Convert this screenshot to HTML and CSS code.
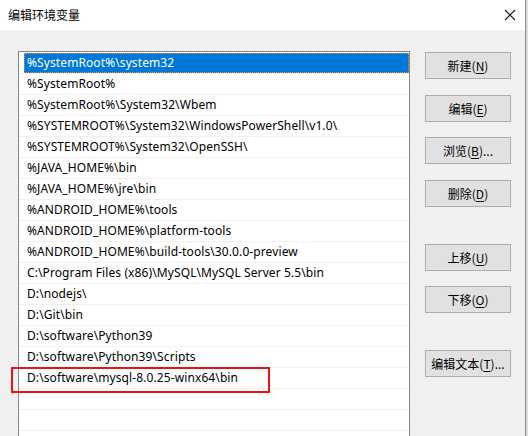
FILE: index.html
```html
<!DOCTYPE html>
<html lang="zh-CN">
<head>
<meta charset="utf-8">
<title>编辑环境变量</title>
<link rel="stylesheet" href="styles.css">
</head>
<body>
<div class="screen">
  <div class="dialog">
    <div class="titlebar">
      <span class="title">编辑环境变量</span>
      <svg class="close" width="12" height="12" viewBox="0 0 12 12"><path d="M1 1 L11 11 M11 1 L1 11" stroke="#111" stroke-width="1.1" fill="none"/></svg>
    </div>
    <div class="content">
      <div class="list">
        <div class="row"><span class="cell selected">%SystemRoot%\system32</span></div>
        <div class="row"><span class="cell">%SystemRoot%</span></div>
        <div class="row"><span class="cell">%SystemRoot%\System32\Wbem</span></div>
        <div class="row"><span class="cell">%SYSTEMROOT%\System32\WindowsPowerShell\v1.0\</span></div>
        <div class="row"><span class="cell">%SYSTEMROOT%\System32\OpenSSH\</span></div>
        <div class="row"><span class="cell">%JAVA_HOME%\bin</span></div>
        <div class="row"><span class="cell">%JAVA_HOME%\jre\bin</span></div>
        <div class="row"><span class="cell">%ANDROID_HOME%\tools</span></div>
        <div class="row"><span class="cell">%ANDROID_HOME%\platform-tools</span></div>
        <div class="row"><span class="cell">%ANDROID_HOME%\build-tools\30.0.0-preview</span></div>
        <div class="row"><span class="cell">C:\Program Files (x86)\MySQL\MySQL Server 5.5\bin</span></div>
        <div class="row"><span class="cell">D:\nodejs\</span></div>
        <div class="row"><span class="cell">D:\Git\bin</span></div>
        <div class="row"><span class="cell">D:\software\Python39</span></div>
        <div class="row"><span class="cell">D:\software\Python39\Scripts</span></div>
        <div class="row"><span class="cell">D:\software\mysql-8.0.25-winx64\bin</span></div>
        <div class="row"><span class="cell"></span></div>
        <div class="row"><span class="cell"></span></div>
        <div class="row"><span class="cell"></span></div>
      </div>
      <div class="buttons">
        <button class="btn">新建(<u>N</u>)</button>
        <button class="btn gap-m">编辑(<u>E</u>)</button>
        <button class="btn gap-s">浏览(<u>B</u>)...</button>
        <button class="btn gap-m">删除(<u>D</u>)</button>
        <button class="btn gap-l">上移(<u>U</u>)</button>
        <button class="btn gap-s">下移(<u>O</u>)</button>
        <button class="btn gap-l">编辑文本(<u>T</u>)...</button>
      </div>
    </div>
    <div class="highlight-box"></div>
  </div>
</div>
</body>
</html>
```
FILE: styles.css
```css
html, body {
  margin: 0;
  padding: 0;
}
body {
  width: 528px;
  height: 436px;
  overflow: hidden;
  background: #dcdcdc;
  font-family: "Noto Sans", "Noto Sans CJK SC", sans-serif;
  font-size: 12px;
  color: #000;
}
.screen {
  display: flex;
  height: 436px;
}
.dialog {
  position: relative;
  width: 525px;
  height: 436px;
  overflow: hidden;
  background: #f0f0f0;
  border-right: 1px solid #8c8c8c;
  display: flex;
  flex-direction: column;
}
.titlebar {
  height: 30px;
  background: #fff;
  display: flex;
  align-items: center;
  justify-content: space-between;
  padding: 0 9px 0 8px;
  flex-shrink: 0;
}
.title {
  font-family: "Noto Sans CJK SC", sans-serif;
  font-size: 12px;
  line-height: 30px;
}
.close {
  display: block;
}
.content {
  display: flex;
  padding: 21px 0 0 18px;
  gap: 15px;
  align-items: flex-start;
}
.list {
  width: 390px;
  height: 385px;
  overflow: hidden;
  background: #fff;
  border: 1px solid #828790;
  padding-top: 1px;
  flex-shrink: 0;
}
.row {
  height: 20px;
  border-bottom: 1px solid #f0f0f0;
  padding-left: 5px;
  display: flex;
}
.cell {
  flex: 1;
  padding-left: 3px;
  line-height: 20px;
  letter-spacing: 0.1px;
  white-space: nowrap;
}
.cell.selected {
  background: #0078d7;
  color: #fff;
  outline: 1px dotted #ff8728;
  outline-offset: -1px;
}
.buttons {
  display: flex;
  flex-direction: column;
  padding-top: 1px;
}
.btn {
  width: 86px;
  height: 27px;
  background: #e1e1e1;
  border: 1px solid #adadad;
  font-family: "Noto Sans CJK SC", sans-serif;
  font-size: 12px;
  color: #000;
  padding: 0;
  margin: 0;
  line-height: 25px;
}
.btn u {
  text-underline-offset: 2px;
}
.gap-s { margin-top: 15px; }
.gap-m { margin-top: 16px; }
.gap-l { margin-top: 37px; }
.highlight-box {
  position: absolute;
  left: 11px;
  top: 367px;
  width: 255px;
  height: 22px;
  border: 2px solid #f01010;
}
```
